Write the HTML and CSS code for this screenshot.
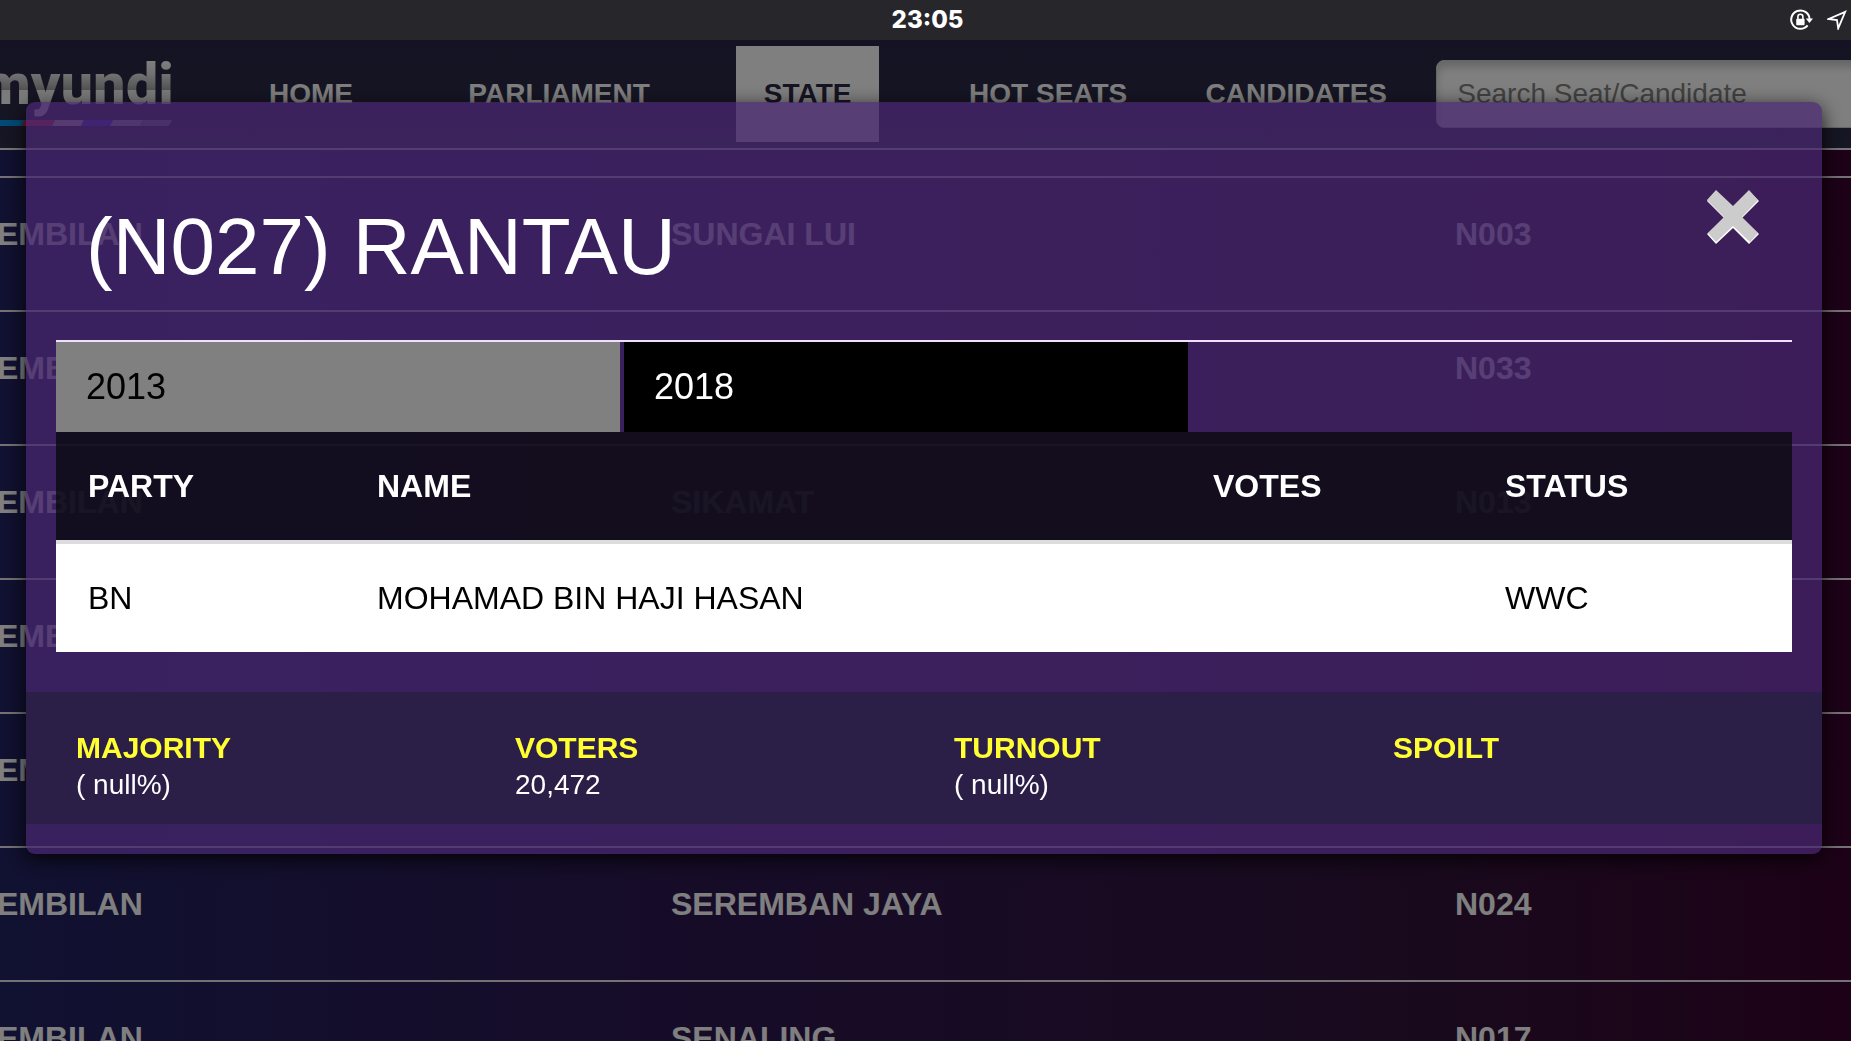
FILE: index.html
```html
<!DOCTYPE html>
<html lang="en">
<head>
<meta charset="utf-8">
<title>myundi - (N027) RANTAU</title>
<link rel="stylesheet" href="styles.css">
</head>
<body>
<div class="screen">
  <div class="statusbar">
    <span></span>
    <time class="clock">23:05</time>
    <div class="status-icons">
      <svg width="24" height="24" viewBox="0 0 24 24" aria-hidden="true">
        <path d="M18.6 17.4A9.2 9.2 0 1 1 20.6 11" fill="none" stroke="#fff" stroke-width="2"/>
        <path d="M16.8 10.5H24L20.4 15Z" fill="#fff"/>
        <rect x="7.2" y="10.8" width="8.4" height="6.4" rx="1" fill="#fff"/>
        <path d="M8.9 11V8.8a2.5 2.5 0 0 1 5 0V11" fill="none" stroke="#fff" stroke-width="1.6"/>
      </svg>
      <svg width="20" height="20" viewBox="0 0 20 20" aria-hidden="true">
        <path d="M18.2 1.8 1.6 9 10 10 11.2 18.4Z" fill="none" stroke="#fff" stroke-width="1.8" stroke-linejoin="miter"/>
      </svg>
    </div>
  </div>

  <header class="topbar">
    <a class="logo" href="#">
      <span class="logo-text">myundi</span>
      <svg class="logo-stripe" width="174" height="6" viewBox="0 0 174 6" aria-hidden="true">
        <path d="M0 0H25L22 6H0Z" fill="#0096f0"/>
        <path d="M25 0H55L52 6H22Z" fill="#ff2850"/>
        <path d="M55 0H84L81 6H52Z" fill="#ffdcd8"/>
        <path d="M84 0H113L110 6H81Z" fill="#6428ff"/>
        <path d="M113 0H143L140 6H110Z" fill="#b8c0c0"/>
        <path d="M143 0H172L169 6H140Z" fill="#9098a8"/>
      </svg>
    </a>
    <nav class="menu">
      <a href="#">HOME</a>
      <a href="#">PARLIAMENT</a>
      <a href="#" class="active">STATE</a>
      <a href="#">HOT SEATS</a>
      <a href="#">CANDIDATES</a>
    </nav>
    <input class="search" type="search" placeholder="Search Seat/Candidate" aria-label="Search Seat/Candidate">
  </header>

  <table class="seats">
    <tbody>
      <tr><td>EMBILAN</td><td>SUNGAI LUI</td><td>N003</td></tr>
      <tr><td>EMBILAN</td><td></td><td>N033</td></tr>
      <tr><td>EMBILAN</td><td>SIKAMAT</td><td>N013</td></tr>
      <tr><td>EMBILAN</td><td></td><td></td></tr>
      <tr><td>EMBILAN</td><td></td><td></td></tr>
      <tr><td>EMBILAN</td><td>SEREMBAN JAYA</td><td>N024</td></tr>
      <tr><td>EMBILAN</td><td>SENALING</td><td>N017</td></tr>
    </tbody>
  </table>
</div>

<div class="backdrop">
  <section class="modal" role="dialog" aria-labelledby="seat-title">
    <div class="modal-head">
      <h1 id="seat-title">(N027) RANTAU</h1>
      <button class="close" type="button" aria-label="Close">
        <svg width="52" height="54" viewBox="0 0 52 54" aria-hidden="true">
          <path d="M9 1 0 11 17 28 0 44 9 54 26 38 42 54 52 44 35 28 52 11 42 1 26 17Z" fill="#fff"/>
          <path d="M9 0 0 10 17 27 1 43 9 52 26 36 43 52 51 43 35 27 51 10 42 0 26 16Z" fill="#ccc"/>
        </svg>
      </button>
    </div>

    <div class="results">
      <div class="tabs">
        <button type="button" class="tab">2013</button>
        <button type="button" class="tab selected">2018</button>
      </div>
      <table class="candidates">
        <thead>
          <tr><th class="c-party">PARTY</th><th class="c-name">NAME</th><th class="c-votes">VOTES</th><th>STATUS</th></tr>
        </thead>
        <tbody>
          <tr><td>BN</td><td>MOHAMAD BIN HAJI HASAN</td><td></td><td>WWC</td></tr>
        </tbody>
      </table>
    </div>

    <dl class="stats">
      <div><dt>MAJORITY</dt><dd>( null%)</dd></div>
      <div><dt>VOTERS</dt><dd>20,472</dd></div>
      <div><dt>TURNOUT</dt><dd>( null%)</dd></div>
      <div><dt>SPOILT</dt><dd></dd></div>
    </dl>
  </section>
</div>
</body>
</html>
```
FILE: styles.css
```css
* { box-sizing: border-box; }

body {
  margin: 0;
  overflow: hidden;
  font-family: "Liberation Sans", Arial, Helvetica, sans-serif;
  color: #fff;
  background: #1c1030;
}

.screen {
  height: 100vh;
  overflow: hidden;
  background: linear-gradient(90deg, #222262, #2e1850 40%, #32143c 75%, #3a042e);
}

/* Device status bar */
.statusbar {
  position: relative;
  z-index: 2;
  display: grid;
  grid-template-columns: 1fr auto 1fr;
  align-items: center;
  height: 40px;
  padding: 0 4px 0 8px;
  background: #27262b;
}
.clock {
  font: 800 24px/40px Inter, sans-serif;
}
.status-icons {
  display: flex;
  justify-content: flex-end;
  align-items: center;
  gap: 14px;
}
.status-icons svg { display: block; }

/* Site navigation */
.topbar {
  display: flex;
  align-items: flex-start;
  height: 110px;
  border-bottom: 2px solid #f0ecf0;
  background: linear-gradient(#2a2746, #2e2c48);
}
.logo {
  display: flex;
  flex-direction: column;
  align-items: flex-end;
  width: 174px;
  padding-top: 8px;
  text-decoration: none;
}
.logo-text {
  font: 800 58px/72px Roboto, sans-serif;
  color: transparent;
  background: linear-gradient(#fff 12px, #e4e4e4 26px, #a4a4a4 42px, #f4f4f4 42px, #fff);
  background-clip: text;
  -webkit-background-clip: text;
}
.logo-stripe { display: block; }
.menu {
  flex: 1;
  display: grid;
  grid-template-columns: 248fr 248fr 249fr 232fr 264fr;
  justify-items: center;
  margin: 6px 8px 0 13px;
}
.menu a {
  padding: 0 28px;
  font-size: 28px;
  line-height: 96px;
  font-weight: 700;
  color: #fff;
  text-decoration: none;
  white-space: nowrap;
}
.menu .active {
  color: #2c2844;
  background: #fff;
}
.search {
  width: 23%;
  height: 68px;
  margin: 20px -11px 0 0;
  padding: 0 20px;
  border: 1px solid #ccc;
  border-radius: 8px;
  font: 28px/34px "Liberation Sans", Arial, sans-serif;
  background: #fff;
  box-shadow: inset 0 6px 8px #ccc;
}
.search::placeholder { color: #848484; opacity: 1; }

/* Seat list behind the dialog */
.seats {
  width: 100%;
  margin-top: 26px;
  border-collapse: collapse;
  table-layout: fixed;
  font-size: 32px;
  font-weight: 700;
}
.seats td {
  height: 134px;
  padding: 0 0 20px;
  border-top: 2px solid #e8e4e8;
}
.seats td:first-child { width: 671px; text-indent: -3px; }
.seats td:last-child { width: 396px; }

/* Dialog */
.backdrop {
  position: fixed;
  inset: 40px 0 0;
  padding: 62px 29px 0 26px;
  background: rgba(0, 0, 0, .5);
}
.modal {
  padding-bottom: 30px;
  border-radius: 9px;
  background: rgba(73, 40, 114, .73);
  box-shadow: 0 5px 20px rgba(0, 0, 0, .8);
}
.modal-head {
  display: flex;
  justify-content: space-between;
  align-items: flex-start;
  padding: 88px 63px 36px 60px;
}
h1 {
  margin: 0;
  font-size: 80px;
  line-height: 114px;
  font-weight: 400;
}
.close {
  padding: 0;
  border: 0;
  background: none;
}
.close svg { display: block; }

.results { margin: 0 30px 40px; }
.tabs {
  display: flex;
  gap: 4px;
  border-top: 2px solid #f0e0fc;
}
.tab {
  width: calc((100% - 600px) / 2 - 4px);
  min-width: 564px;
  height: 90px;
  padding: 0 30px;
  border: 0;
  font: 36px/42px "Liberation Sans", Arial, sans-serif;
  text-align: left;
  color: #000;
  background: #808080;
}
.tab.selected { color: #fff; background: #000; }

.candidates {
  width: 100%;
  border-spacing: 0;
  table-layout: fixed;
  font-size: 32px;
}
.candidates th,
.candidates td {
  padding: 0 32px;
  text-align: left;
}
.candidates th {
  height: 112px;
  border-bottom: 4px solid #dcdcdc;
  background: rgba(7, 8, 10, .75);
  background-clip: padding-box;
}
.candidates td {
  height: 108px;
  color: #000;
  background: #fff;
}
.c-party { width: 289px; }
.c-votes { width: 292px; }
.candidates th:last-child { width: 319px; }

.stats {
  display: grid;
  grid-template-columns: repeat(4, 1fr);
  margin: 0;
  padding: 38px 20px 20px;
  background: #2b1f48;
}
.stats div { padding-left: 30px; }
.stats dt {
  font-size: 30px;
  line-height: 36px;
  font-weight: 700;
  color: #ffff32;
}
.stats dd {
  min-height: 38px;
  margin: 0;
  font-size: 28px;
  line-height: 38px;
}
```
